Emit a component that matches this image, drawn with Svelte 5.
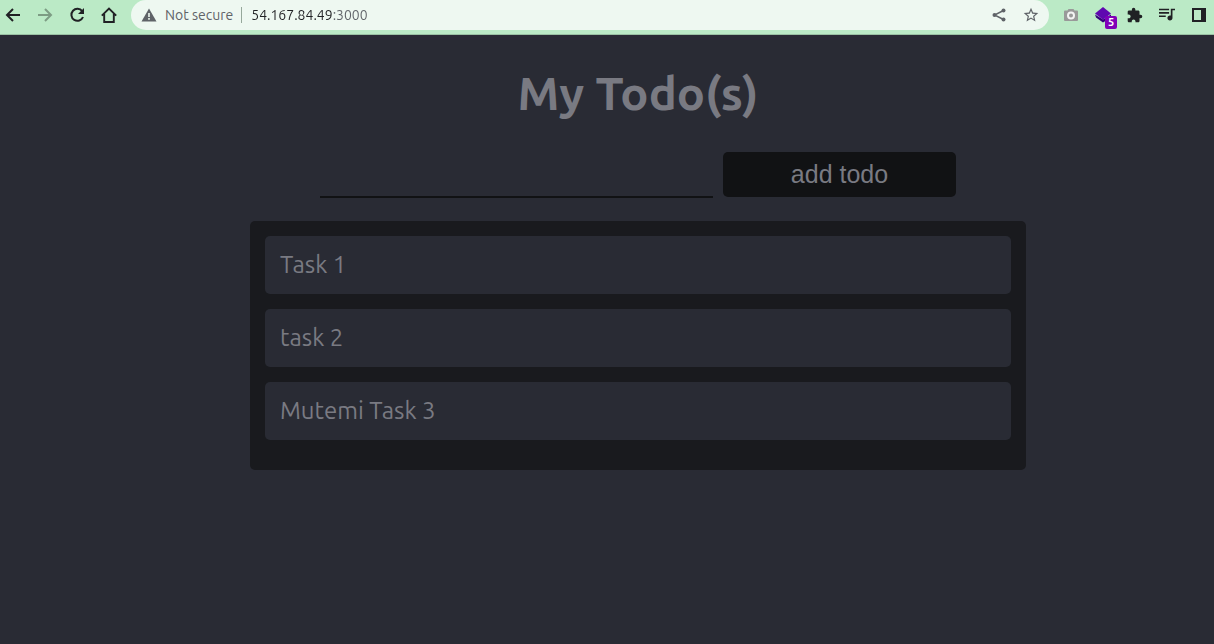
<script lang="ts">
  type Todo = { id: number; text: string };

  let todos: Todo[] = $state([
    { id: 1, text: 'Task 1' },
    { id: 2, text: 'task 2' },
    { id: 3, text: 'Mutemi Task 3' }
  ]);
  let draft = $state('');
  let address = $state('54.167.84.49:3000');

  function addTodo(event: SubmitEvent) {
    event.preventDefault();
    const text = draft.trim();
    if (!text) return;
    todos.push({ id: Date.now(), text });
    draft = '';
  }
</script>

<div class="browser">
  <header class="toolbar">
    <nav class="nav" aria-label="Browser">
      <button type="button" aria-label="Back">
        <svg viewBox="0 0 16 16"><path d="M15 8H2M8 2L2 8l6 6" fill="none" stroke="#202124" stroke-width="2" /></svg>
      </button>
      <button type="button" aria-label="Forward">
        <svg viewBox="0 0 16 16"><path d="M1 8h13M8 2l6 6-6 6" fill="none" stroke="#7d9c84" stroke-width="2" /></svg>
      </button>
      <button type="button" aria-label="Reload">
        <svg viewBox="0 0 16 16">
          <path d="M13.2 4.2A6 6 0 1 0 14 10" fill="none" stroke="#202124" stroke-width="2" />
          <path d="M15 1v6H9z" fill="#202124" />
        </svg>
      </button>
      <button type="button" aria-label="Home">
        <svg viewBox="0 0 16 16"><path d="M.8 8.6L8 1.6l7.2 7M3.2 7v8h9.6V7" fill="none" stroke="#202124" stroke-width="1.9" /></svg>
      </button>
    </nav>

    <div class="omnibox">
      <button type="button" class="security">
        <svg viewBox="0 0 16 16">
          <path d="M8 1.5L15.5 14.5H.5z" fill="#5f6368" />
          <path d="M7.2 6h1.6v4H7.2zM7.2 11h1.6v1.7H7.2z" fill="#eef8f1" />
        </svg>
        <span>Not secure</span>
      </button>
      <input class="address" aria-label="Address" spellcheck="false" bind:value={address} />
      <button type="button" aria-label="Share">
        <svg viewBox="0 0 16 16">
          <path d="M12.5 3.5L3.5 8l9 4.5" fill="none" stroke="#5f6368" stroke-width="1.4" />
          <circle cx="12.5" cy="3.5" r="2" fill="#5f6368" />
          <circle cx="3.5" cy="8" r="2" fill="#5f6368" />
          <circle cx="12.5" cy="12.5" r="2" fill="#5f6368" />
        </svg>
      </button>
      <button type="button" aria-label="Bookmark">
        <svg viewBox="1 1 22 22">
          <path d="M22 9.24l-7.19-.62L12 2 9.19 8.63 2 9.24l5.46 4.73L5.82 21 12 17.27 18.18 21l-1.63-7.03L22 9.24zM12 15.4l-3.76 2.27 1-4.28-3.32-2.88 4.38-.38L12 6.1l1.71 4.04 4.38.38-3.32 2.88 1 4.28L12 15.4z" fill="#5f6368" />
        </svg>
      </button>
    </div>

    <div class="extensions">
      <button type="button" aria-label="Screenshot">
        <svg viewBox="0 0 16 16">
          <path d="M1 4.5q0-1 1-1h2.5L5.5 2h5l1 1.5H14q1 0 1 1V13q0 1-1 1H2q-1 0-1-1z" fill="#999" />
          <circle cx="8" cy="8.6" r="3" fill="none" stroke="#f3f3f3" stroke-width="2" />
        </svg>
      </button>
      <button type="button" class="wallet" aria-label="Layers, 5 items">
        <svg viewBox="0 0 16 16">
          <path d="M0 7.5l8 5 8-5v3l-8 5-7-5z" fill="#34007a" />
          <path d="M8 0l8 6.5-8 6.2L0 6.5z" fill="#5f08b0" />
        </svg>
        <span class="badge">5</span>
      </button>
      <button type="button" aria-label="Extensions">
        <svg viewBox="1 0 23 23">
          <path d="M20.5 11H19V7c0-1.1-.9-2-2-2h-4V3.5a2.5 2.5 0 0 0-5 0V5H4c-1.1 0-2 .9-2 2v3.8h1.5c1.49 0 2.7 1.21 2.7 2.7s-1.21 2.7-2.7 2.7H2V20c0 1.1.9 2 2 2h3.8v-1.5c0-1.49 1.21-2.7 2.7-2.7s2.7 1.21 2.7 2.7V22H17c1.1 0 2-.9 2-2v-4h1.5a2.5 2.5 0 0 0 0-5z" fill="#202124" />
        </svg>
      </button>
      <button type="button" aria-label="Media">
        <svg viewBox="3 4 19 19">
          <path d="M15 6H3v2h12V6zm0 4H3v2h12v-2zM3 16h8v-2H3v2zM17 6v8.18c-.31-.11-.65-.18-1-.18-1.66 0-3 1.34-3 3s1.34 3 3 3 3-1.34 3-3V8h3V6h-5z" fill="#202124" />
        </svg>
      </button>
      <button type="button" aria-label="Side panel">
        <svg viewBox="0 0 16 16">
          <path d="M2 2h12v12H2z" fill="none" stroke="#202124" stroke-width="2" />
          <path d="M10 2h4v12h-4z" fill="#202124" />
        </svg>
      </button>
    </div>
  </header>

  <main>
    <section class="app">
      <h1>My Todo(s)</h1>
      <form onsubmit={addTodo}>
        <input class="draft" aria-label="New todo" bind:value={draft} />
        <button class="add" type="submit">add todo</button>
      </form>
      <ul>
        {#each todos as todo (todo.id)}
          <li>{todo.text}</li>
        {/each}
      </ul>
    </section>
  </main>
</div>

<style>
  :global(body) {
    margin: 0;
    background: #292b34;
  }

  .browser {
    min-height: 100vh;
    background: #292b34;
    font-family: Ubuntu, 'Noto Sans', sans-serif;
  }

  button,
  input {
    margin: 0;
    padding: 0;
    border: 0;
    background: none;
    font: inherit;
    color: inherit;
  }

  button {
    cursor: pointer;
  }

  .toolbar {
    display: flex;
    align-items: flex-start;
    background: #bbeac6;
    border-bottom: 1px solid #9ac1a3;
    font-size: 14px;
    line-height: 20px;
    height: 34px;
  }

  .toolbar button {
    display: flex;
    align-items: center;
    justify-content: center;
    height: 30px;
    flex: none;
  }

  .toolbar svg {
    display: block;
    width: 16px;
    height: 16px;
  }

  .nav,
  .extensions {
    display: flex;
    gap: 16px;
  }

  .nav {
    padding: 0 14px 0 5px;
  }

  .extensions {
    padding: 0 7px 0 14px;
  }

  .omnibox {
    flex: 1;
    display: flex;
    align-items: center;
    gap: 16px;
    min-width: 0;
    padding: 0 10px;
    border-radius: 15px;
    background: #eef8f1;
  }

  .toolbar .security {
    gap: 8px;
    color: #5f6368;
  }

  .security::after {
    content: '';
    width: 1px;
    height: 16px;
    background: #96a89b;
  }

  /* the host is dark and the port after it is grey */
  .address {
    flex: 1;
    min-width: 0;
    height: 20px;
    margin-left: -7px;
    background: linear-gradient(90deg, #202124 81px, #5f6368 81px);
    background-clip: text;
    color: transparent;
    caret-color: #202124;
    outline: none;
  }

  .wallet {
    position: relative;
  }

  .badge {
    position: absolute;
    right: -6px;
    bottom: 1px;
    width: 12px;
    border-radius: 2px;
    background: #8000b8;
    color: #fff;
    font-size: 11px;
    font-weight: 700;
    line-height: 13px;
  }

  main {
    padding: 0 0 32px 62px;
  }

  .app {
    max-width: 776px;
    margin: 0 auto;
    color: #797a82;
  }

  h1 {
    margin: 0;
    padding: 30px 0 31px;
    font-size: 47px;
    line-height: 56px;
    text-align: center;
  }

  form {
    display: flex;
    align-items: flex-start;
    gap: 10px;
    padding: 0 70px;
  }

  .draft {
    flex: 1;
    min-width: 0;
    height: 44px;
    border-bottom: 2px solid #111214;
    font-size: 24px;
    outline: none;
  }

  .add {
    width: 233px;
    height: 45px;
    border-radius: 5px;
    background: #111214;
    font-family: 'Liberation Sans', Arial, sans-serif;
    font-size: 25px;
  }

  ul {
    display: flex;
    flex-direction: column;
    gap: 15px;
    margin: 23px 0 0;
    padding: 15px 15px 30px;
    border-radius: 5px;
    background: #191a1e;
    list-style: none;
  }

  li {
    padding: 15px;
    border-radius: 5px;
    background: #292b34;
    font-size: 24px;
    line-height: 28px;
  }
</style>
